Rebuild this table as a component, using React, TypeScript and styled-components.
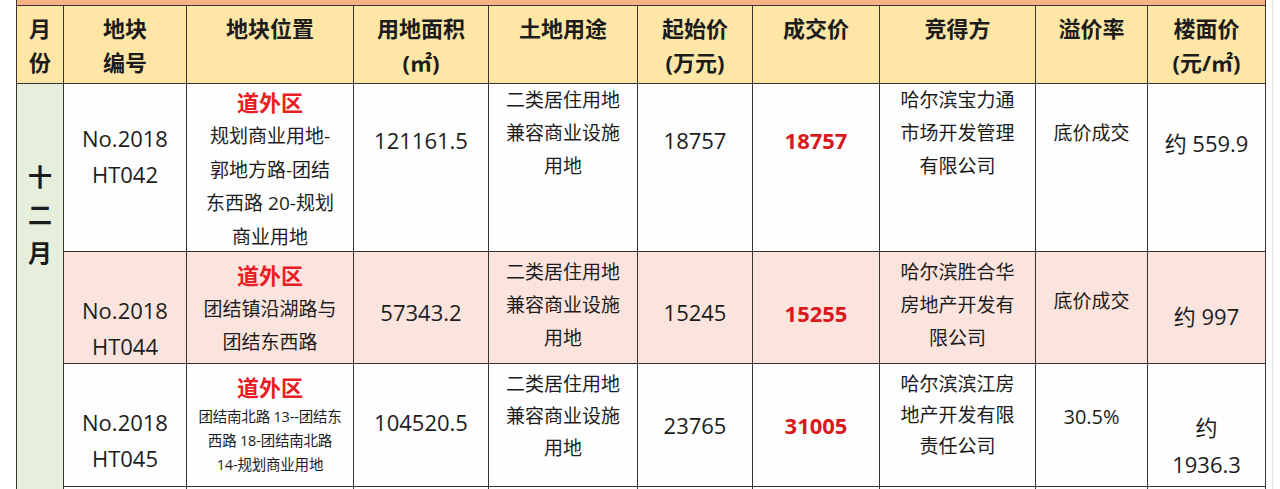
import React from 'react';
import styled, { createGlobalStyle } from 'styled-components';

const GlobalStyle = createGlobalStyle`
  html, body {
    margin: 0;
    padding: 0;
    background: #ffffff;
    overflow: hidden;
  }
  body {
    font-family: "Open Sans", "Noto Sans CJK SC", sans-serif;
    color: #1c1c1c;
  }
`;

type LineKind = 'text' | 'num' | 'small' | 'district' | 'price' | 'head' | 'month';

type CellData = {
  lines: string[];
  pt: number;
  lh?: number;
  kind?: LineKind;
  district?: boolean;
};

type RowData = {
  id: string;
  height: number;
  tone: 'plain' | 'pink';
  cells: CellData[];
};

const columns = [47, 123, 167, 135, 149, 115, 127, 156, 112, 118];

const headCells: CellData[] = [
  { lines: ['月', '份'], pt: 5 },
  { lines: ['地块', '编号'], pt: 5 },
  { lines: ['地块位置'], pt: 5 },
  { lines: ['用地面积', '(㎡)'], pt: 5 },
  { lines: ['土地用途'], pt: 5 },
  { lines: ['起始价', '(万元)'], pt: 5 },
  { lines: ['成交价'], pt: 5 },
  { lines: ['竞得方'], pt: 5 },
  { lines: ['溢价率'], pt: 5 },
  { lines: ['楼面价', '(元/㎡)'], pt: 5 },
];

const rows: RowData[] = [
  {
    id: 'HT042',
    height: 168,
    tone: 'plain',
    cells: [
      { lines: ['No.2018', 'HT042'], pt: 36, lh: 36, kind: 'num' },
      {
        lines: ['规划商业用地-', '郭地方路-团结', '东西路 20-规划', '商业用地'],
        pt: 0,
        lh: 33.5,
        district: true,
      },
      { lines: ['121161.5'], pt: 39, lh: 34, kind: 'num' },
      { lines: ['二类居住用地', '兼容商业设施', '用地'], pt: 0, lh: 33 },
      { lines: ['18757'], pt: 39, lh: 34, kind: 'num' },
      { lines: ['18757'], pt: 39, lh: 34, kind: 'price' },
      { lines: ['哈尔滨宝力通', '市场开发管理', '有限公司'], pt: 0, lh: 33 },
      { lines: ['底价成交'], pt: 33, lh: 33 },
      { lines: ['约 559.9'], pt: 42, lh: 34, kind: 'num' },
    ],
  },
  {
    id: 'HT044',
    height: 112,
    tone: 'pink',
    cells: [
      { lines: ['No.2018', 'HT044'], pt: 40, lh: 36, kind: 'num' },
      { lines: ['团结镇沿湖路与', '团结东西路'], pt: 5, lh: 33, district: true },
      { lines: ['57343.2'], pt: 43, lh: 34, kind: 'num' },
      { lines: ['二类居住用地', '兼容商业设施', '用地'], pt: 4, lh: 33 },
      { lines: ['15245'], pt: 43, lh: 34, kind: 'num' },
      { lines: ['15255'], pt: 44, lh: 34, kind: 'price' },
      { lines: ['哈尔滨胜合华', '房地产开发有', '限公司'], pt: 4, lh: 33 },
      { lines: ['底价成交'], pt: 33, lh: 33 },
      { lines: ['约 997'], pt: 47, lh: 34, kind: 'num' },
    ],
  },
  {
    id: 'HT045',
    height: 123,
    tone: 'plain',
    cells: [
      { lines: ['No.2018', 'HT045'], pt: 40, lh: 36, kind: 'num' },
      {
        lines: ['团结南北路 13--团结东', '西路 18-团结南北路', '14-规划商业用地'],
        pt: 5,
        lh: 24,
        kind: 'small',
        district: true,
      },
      { lines: ['104520.5'], pt: 41, lh: 34, kind: 'num' },
      { lines: ['二类居住用地', '兼容商业设施', '用地'], pt: 4, lh: 32 },
      { lines: ['23765'], pt: 44, lh: 34, kind: 'num' },
      { lines: ['31005'], pt: 44, lh: 34, kind: 'price' },
      { lines: ['哈尔滨滨江房', '地产开发有限', '责任公司'], pt: 5, lh: 31 },
      { lines: ['30.5%'], pt: 36, lh: 33, kind: 'rate' as LineKind },
      { lines: ['约', '1936.3'], pt: 45, lh: 37, kind: 'num' },
    ],
  },
];

const Page = styled.div`
  width: 1273px;
  height: 489px;
  padding-left: 16px;
  box-sizing: border-box;
  border-right: 1px solid #e4e4e4;
  overflow: hidden;
`;

const Table = styled.table`
  width: 1249px;
  table-layout: fixed;
  border-collapse: collapse;
`;

const BandRow = styled.tr`
  height: 5px;
`;

const Band = styled.td`
  padding: 0;
  height: 5px;
  background: #f4b287;
  border-left: 1.5px solid #3a3230;
  border-right: 1.5px solid #3a3230;
  border-bottom: 1.5px solid #3a3230;
`;

const Row = styled.tr<{ $height: number; $tone: 'plain' | 'pink' | 'head' }>`
  height: ${({ $height }) => `${$height}px`};
  background: ${({ $tone }) =>
    $tone === 'head' ? '#fde6a6' : $tone === 'pink' ? '#fce4de' : '#fefefe'};
`;

const Cell = styled.td`
  padding: 0;
  border: 1.5px solid #3a3230;
  vertical-align: top;
  text-align: center;
  white-space: nowrap;
  overflow: hidden;
`;

const MonthCell = styled(Cell)`
  background: #e5efdb;
`;

/* fixed-height body so the text never pushes the row taller */
const CellBody = styled.div<{ $pt: number; $height: number }>`
  box-sizing: border-box;
  height: ${({ $height }) => `${$height}px`};
  padding-top: ${({ $pt }) => `${$pt}px`};
  overflow: visible;
`;

const sizeFor = (kind: string) => {
  switch (kind) {
    case 'num':
    case 'price':
    case 'head':
    case 'district':
      return '22px';
    case 'month':
      return '24px';
    case 'small':
      return '14.5px';
    case 'rate':
      return '20px';
    default:
      return '19px';
  }
};

const Line = styled.div<{ $kind: string; $lh: number }>`
  line-height: ${({ $lh }) => `${$lh}px`};
  font-size: ${({ $kind }) => sizeFor($kind)};
  font-weight: ${({ $kind }) =>
    ['price', 'head', 'district', 'month'].includes($kind) ? 700 : 400};
  color: ${({ $kind }) =>
    $kind === 'price' ? '#d9191c' : $kind === 'district' ? '#ea1c24' : '#1c1c1c'};
  letter-spacing: ${({ $kind }) => ($kind === 'small' ? '-0.2px' : '0')};
`;

const BodyCell: React.FC<{ cell: CellData; height: number }> = ({ cell, height }) => {
  const lh = cell.lh ?? 34;
  return (
    <Cell>
      <CellBody $pt={cell.pt} $height={height - 4}>
        {cell.district && (
          <Line $kind="district" $lh={36}>
            道外区
          </Line>
        )}
        {cell.lines.map((line) => (
          <Line key={line} $kind={cell.kind ?? 'text'} $lh={lh}>
            {line}
          </Line>
        ))}
      </CellBody>
    </Cell>
  );
};

const App: React.FC = () => {
  const monthSpan = rows.reduce((sum, r) => sum + r.height, 0);
  return (
    <Page>
      <GlobalStyle />
      <Table>
        <colgroup>
          {columns.map((w, i) => (
            <col key={i} style={{ width: w }} />
          ))}
        </colgroup>
        <tbody>
          <BandRow>
            <Band colSpan={columns.length} />
          </BandRow>
          <Row $height={78} $tone="head">
            {headCells.map((cell) => (
              <Cell key={cell.lines.join('')}>
                <CellBody $pt={cell.pt} $height={74}>
                  {cell.lines.map((line) => (
                    <Line key={line} $kind="head" $lh={34}>
                      {line}
                    </Line>
                  ))}
                </CellBody>
              </Cell>
            ))}
          </Row>
          {rows.map((row, index) => (
            <Row key={row.id} $height={row.height} $tone={row.tone}>
              {index === 0 && (
                <MonthCell rowSpan={rows.length + 1}>
                  <CellBody $pt={74} $height={monthSpan - 10}>
                    {['十', '二', '月'].map((ch) => (
                      <Line key={ch} $kind="month" $lh={38}>
                        {ch}
                      </Line>
                    ))}
                  </CellBody>
                </MonthCell>
              )}
              {row.cells.map((cell, i) => (
                <BodyCell key={`${row.id}-${i}`} cell={cell} height={row.height} />
              ))}
            </Row>
          ))}
          <Row $height={30} $tone="plain">
            {columns.slice(1).map((_, i) => (
              <Cell key={i} />
            ))}
          </Row>
        </tbody>
      </Table>
    </Page>
  );
};

export default App;
